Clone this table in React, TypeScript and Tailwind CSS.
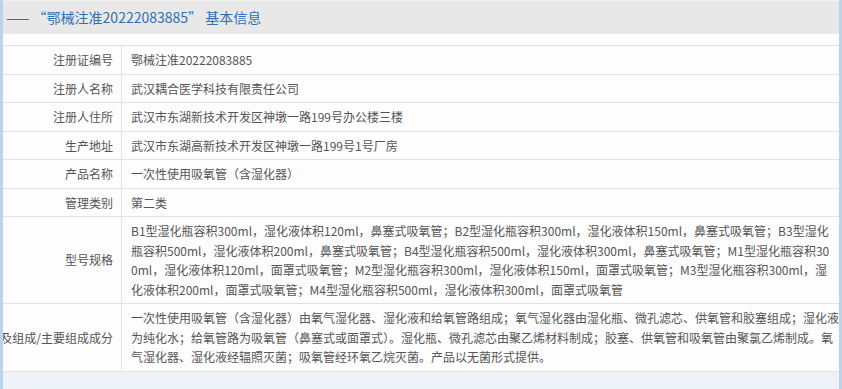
const rows: { label: string; lines: string[] }[] = [
  { label: "注册证编号", lines: ["鄂械注准20222083885"] },
  { label: "注册人名称", lines: ["武汉耦合医学科技有限责任公司"] },
  { label: "注册人住所", lines: ["武汉市东湖新技术开发区神墩一路199号办公楼三楼"] },
  { label: "生产地址", lines: ["武汉市东湖高新技术开发区神墩一路199号1号厂房"] },
  { label: "产品名称", lines: ["一次性使用吸氧管（含湿化器）"] },
  { label: "管理类别", lines: ["第二类"] },
  {
    label: "型号规格",
    lines: [
      "B1型湿化瓶容积300ml，湿化液体积120ml，鼻塞式吸氧管；B2型湿化瓶容积300ml，湿化液体积150ml，鼻塞式吸氧管；B3型湿化",
      "瓶容积500ml，湿化液体积200ml，鼻塞式吸氧管；B4型湿化瓶容积500ml，湿化液体积300ml，鼻塞式吸氧管；M1型湿化瓶容积30",
      "0ml，湿化液体积120ml，面罩式吸氧管；M2型湿化瓶容积300ml，湿化液体积150ml，面罩式吸氧管；M3型湿化瓶容积300ml，湿",
      "化液体积200ml，面罩式吸氧管；M4型湿化瓶容积500ml，湿化液体积300ml，面罩式吸氧管",
    ],
  },
  {
    label: "结构及组成/主要组成成分",
    lines: [
      "一次性使用吸氧管（含湿化器）由氧气湿化器、湿化液和给氧管路组成；氧气湿化器由湿化瓶、微孔滤芯、供氧管和胶塞组成；湿化液",
      "为纯化水；给氧管路为吸氧管（鼻塞式或面罩式）。湿化瓶、微孔滤芯由聚乙烯材料制成；胶塞、供氧管和吸氧管由聚氯乙烯制成。氧",
      "气湿化器、湿化液经辐照灭菌；吸氧管经环氧乙烷灭菌。产品以无菌形式提供。",
    ],
  },
];

function Row(props: { label: string; lines: string[] }) {
  return (
    <div className="flex border-b border-[#e2e2e2]">
      {/* long labels overflow to the left and get clipped, like the original page */}
      <div className="flex w-[119px] shrink-0 items-center justify-end overflow-hidden border-r border-[#e2e2e2] py-[4px] pr-[8px]">
        <span className="whitespace-nowrap">{props.label}</span>
      </div>
      <div className="min-w-0 flex-1 py-[4px] pl-[9px]">
        {props.lines.map((line, i) => (
          <div key={i} className="whitespace-nowrap">
            {line}
          </div>
        ))}
      </div>
    </div>
  );
}

export default function App() {
  return (
    <div
      className="flex h-[389px] w-[842px] flex-col overflow-hidden border-x-[3px] border-[#bcd3ec] bg-[#eef3fa]"
      style={{ fontFamily: '"Microsoft YaHei", "Noto Sans CJK SC", sans-serif' }}
    >
      <div className="flex h-[34px] shrink-0 items-center border-t border-[#f2f2f2] bg-[#e8e8e8] pl-[3px] text-[14px] text-[#2f6fb6]">
        <span className="whitespace-nowrap">——&nbsp;“鄂械注准20222083885”&nbsp;基本信息</span>
      </div>
      <div className="h-[11px] shrink-0 bg-white" />
      <div className="border-t border-[#e2e2e2] bg-[#fdfdfd] text-[12px] leading-[19.5px] text-[#555]">
        {rows.map((r) => (
          <Row key={r.label} label={r.label} lines={r.lines} />
        ))}
      </div>
    </div>
  );
}
